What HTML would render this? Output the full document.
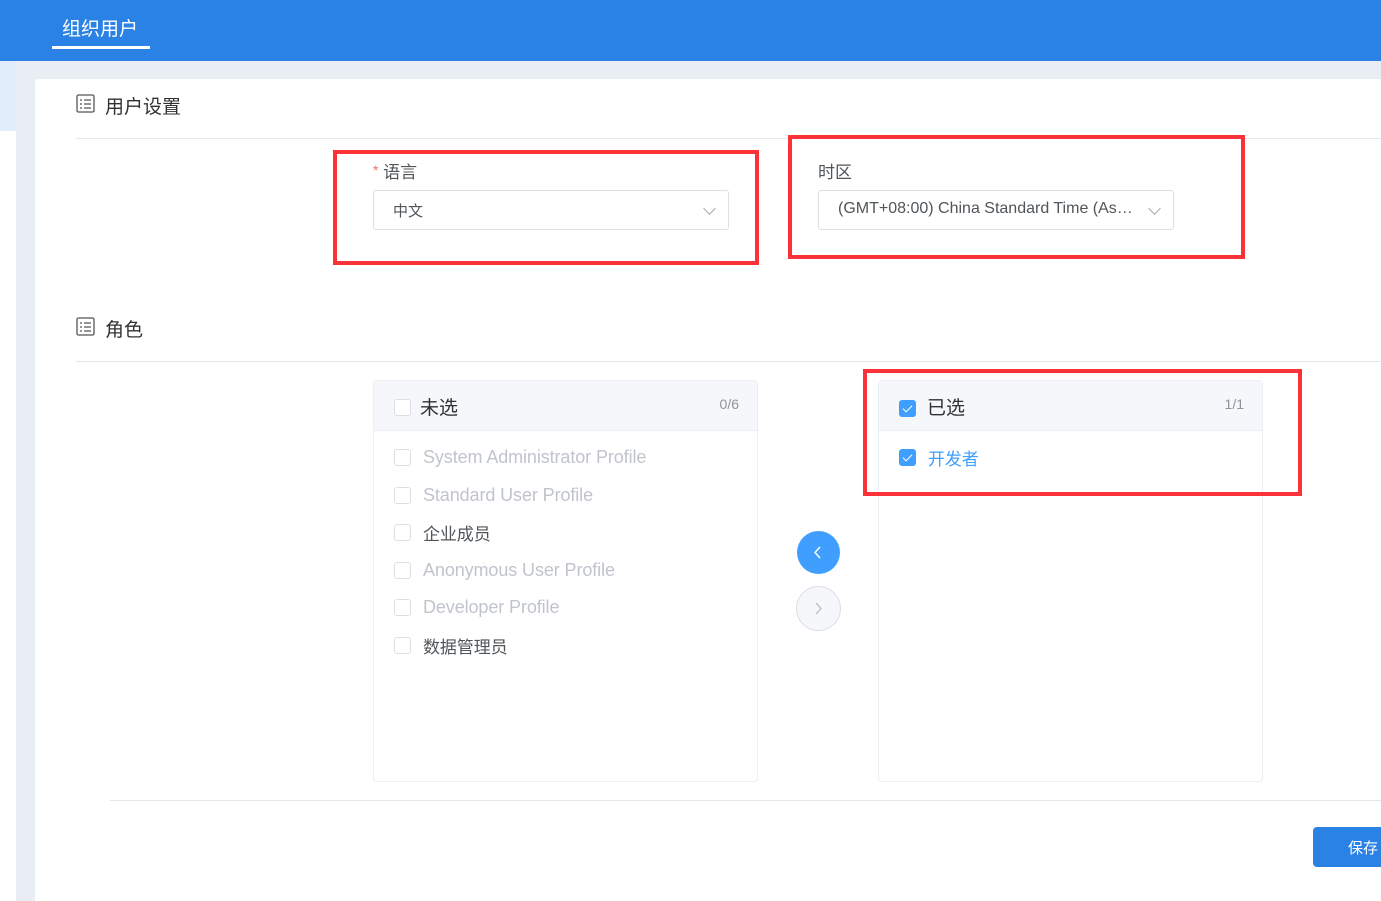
<!DOCTYPE html>
<html><head><meta charset="utf-8"><style>
*{box-sizing:border-box;margin:0;padding:0}
body{width:1381px;height:901px;overflow:hidden;background:#e9eef5;font-family:"Liberation Sans","Noto Sans CJK SC",sans-serif;position:relative;color:#303133}
.abs{position:absolute}
.hdr{left:0;top:0;width:1381px;height:61px;background:#2a82e4}
.tab{left:62px;top:14px;color:#fff;font-size:19px}
.tabline{left:52px;top:46px;width:98px;height:3px;background:#fff}
.side{left:0;top:61px;width:16px;height:840px;background:#fff}
.sideb{left:0;top:61px;width:16px;height:70px;background:#e1edfb}
.card{left:35px;top:79px;width:1346px;height:822px;background:#fff;border-radius:4px 0 0 0}
.ttl{font-size:19px;color:#303133}
.hr{height:1px;background:#e4e6eb}
.red{border:4px solid #fb3338}
.lbl{font-size:17px;color:#505559}
.sel{border:1px solid #dcdfe6;border-radius:3px;height:40px;width:356px;font-size:15px;color:#505559;padding:9px 19px}
.chev{position:absolute;right:14px;top:13px;width:9px;height:9px;border-right:1.3px solid #a8abb2;border-bottom:1.3px solid #a8abb2;transform:rotate(45deg)}
.panel{border:1px solid #ebeef5;border-radius:4px;width:385px;height:402px}
.ph{height:50px;background:#f5f7fa;border-bottom:1px solid #ebeef5;position:relative}
.cb{position:absolute;width:17px;height:17px;border:1px solid #dcdfe6;border-radius:3px;background:#fff}
.cb.on{background:#409eff;border-color:#409eff}
.cb.on:after{content:"";position:absolute;left:5px;top:2px;width:4px;height:8px;border-right:1.5px solid #fff;border-bottom:1.5px solid #fff;transform:rotate(45deg)}
.it{position:absolute;left:49px;font-size:18px;color:#c0c4cc;letter-spacing:-0.1px}
.cj{font-size:17px;color:#505559}
</style></head><body>
<div class="abs hdr"></div>
<div class="abs tab">组织用户</div>
<div class="abs tabline"></div>
<div class="abs side"></div><div class="abs sideb"></div>
<div class="abs card"></div>

<svg class="abs" style="left:76px;top:94px" width="20" height="20" viewBox="0 0 20 20"><rect x="1" y="1" width="17" height="17" rx="1.5" fill="none" stroke="#555" stroke-width="1.3"/><path d="M4 6h2M8 6h7M4 10h2M8 10h7M4 14h2M8 14h7" stroke="#555" stroke-width="1.3"/></svg>
<div class="abs ttl" style="left:105px;top:92px">用户设置</div>
<div class="abs hr" style="left:76px;top:138px;width:1305px"></div>

<div class="abs red" style="left:333px;top:150px;width:426px;height:115px"></div>
<div class="abs lbl" style="left:373px;top:158px"><span style="color:#f56c6c;font-size:14px;vertical-align:3px">*</span> 语言</div>
<div class="abs sel" style="left:373px;top:190px">中文<span class="chev"></span></div>

<div class="abs red" style="left:788px;top:135px;width:457px;height:124px"></div>
<div class="abs lbl" style="left:818px;top:158px">时区</div>
<div class="abs sel" style="left:818px;top:190px;font-size:16px;white-space:nowrap">(GMT+08:00) China Standard Time (As…<span class="chev"></span></div>

<svg class="abs" style="left:76px;top:317px" width="20" height="20" viewBox="0 0 20 20"><rect x="1" y="1" width="17" height="17" rx="1.5" fill="none" stroke="#555" stroke-width="1.3"/><path d="M4 6h2M8 6h7M4 10h2M8 10h7M4 14h2M8 14h7" stroke="#555" stroke-width="1.3"/></svg>
<div class="abs ttl" style="left:105px;top:315px">角色</div>
<div class="abs hr" style="left:76px;top:361px;width:1305px"></div>

<div class="abs panel" style="left:373px;top:380px">
 <div class="ph"><div class="cb" style="left:20px;top:18px"></div><span style="position:absolute;left:46px;top:12px;font-size:19px">未选</span><span style="position:absolute;right:18px;top:15px;font-size:14px;color:#909399">0/6</span></div>
 <div class="cb" style="left:20px;top:68px"></div><div class="it" style="top:66px">System Administrator Profile</div>
 <div class="cb" style="left:20px;top:106px"></div><div class="it" style="top:104px">Standard User Profile</div>
 <div class="cb" style="left:20px;top:143px"></div><div class="it cj" style="top:139px">企业成员</div>
 <div class="cb" style="left:20px;top:181px"></div><div class="it" style="top:179px">Anonymous User Profile</div>
 <div class="cb" style="left:20px;top:218px"></div><div class="it" style="top:216px">Developer Profile</div>
 <div class="cb" style="left:20px;top:256px"></div><div class="it cj" style="top:252px">数据管理员</div>
</div>

<div class="abs" style="left:797px;top:531px;width:43px;height:43px;border-radius:50%;background:#409eff"></div>
<svg class="abs" style="left:797px;top:531px" width="43" height="43"><path d="M23 16l-5 5.5 5 5.5" fill="none" stroke="#fff" stroke-width="1.5"/></svg>
<div class="abs" style="left:796px;top:586px;width:45px;height:45px;border-radius:50%;background:#f5f7fa;border:1px solid #dcdfe6"></div>
<svg class="abs" style="left:796px;top:586px" width="45" height="45"><path d="M20 17l5 5.5-5 5.5" fill="none" stroke="#c0c4cc" stroke-width="1.5"/></svg>

<div class="abs panel" style="left:878px;top:380px">
 <div class="ph"><div class="cb on" style="left:20px;top:19px"></div><span style="position:absolute;left:48px;top:12px;font-size:19px">已选</span><span style="position:absolute;right:18px;top:15px;font-size:14px;color:#909399">1/1</span></div>
 <div class="cb on" style="left:20px;top:68px"></div><div class="it cj" style="top:64px;color:#409eff">开发者</div>
</div>
<div class="abs red" style="left:863px;top:369px;width:439px;height:127px"></div>

<div class="abs hr" style="left:110px;top:800px;width:1271px"></div>
<div class="abs" style="left:1313px;top:827px;width:80px;height:40px;background:#2a82e4;border-radius:4px;color:#fff;font-size:15px;padding:10px 0 0 35px">保存</div>
</body></html>
